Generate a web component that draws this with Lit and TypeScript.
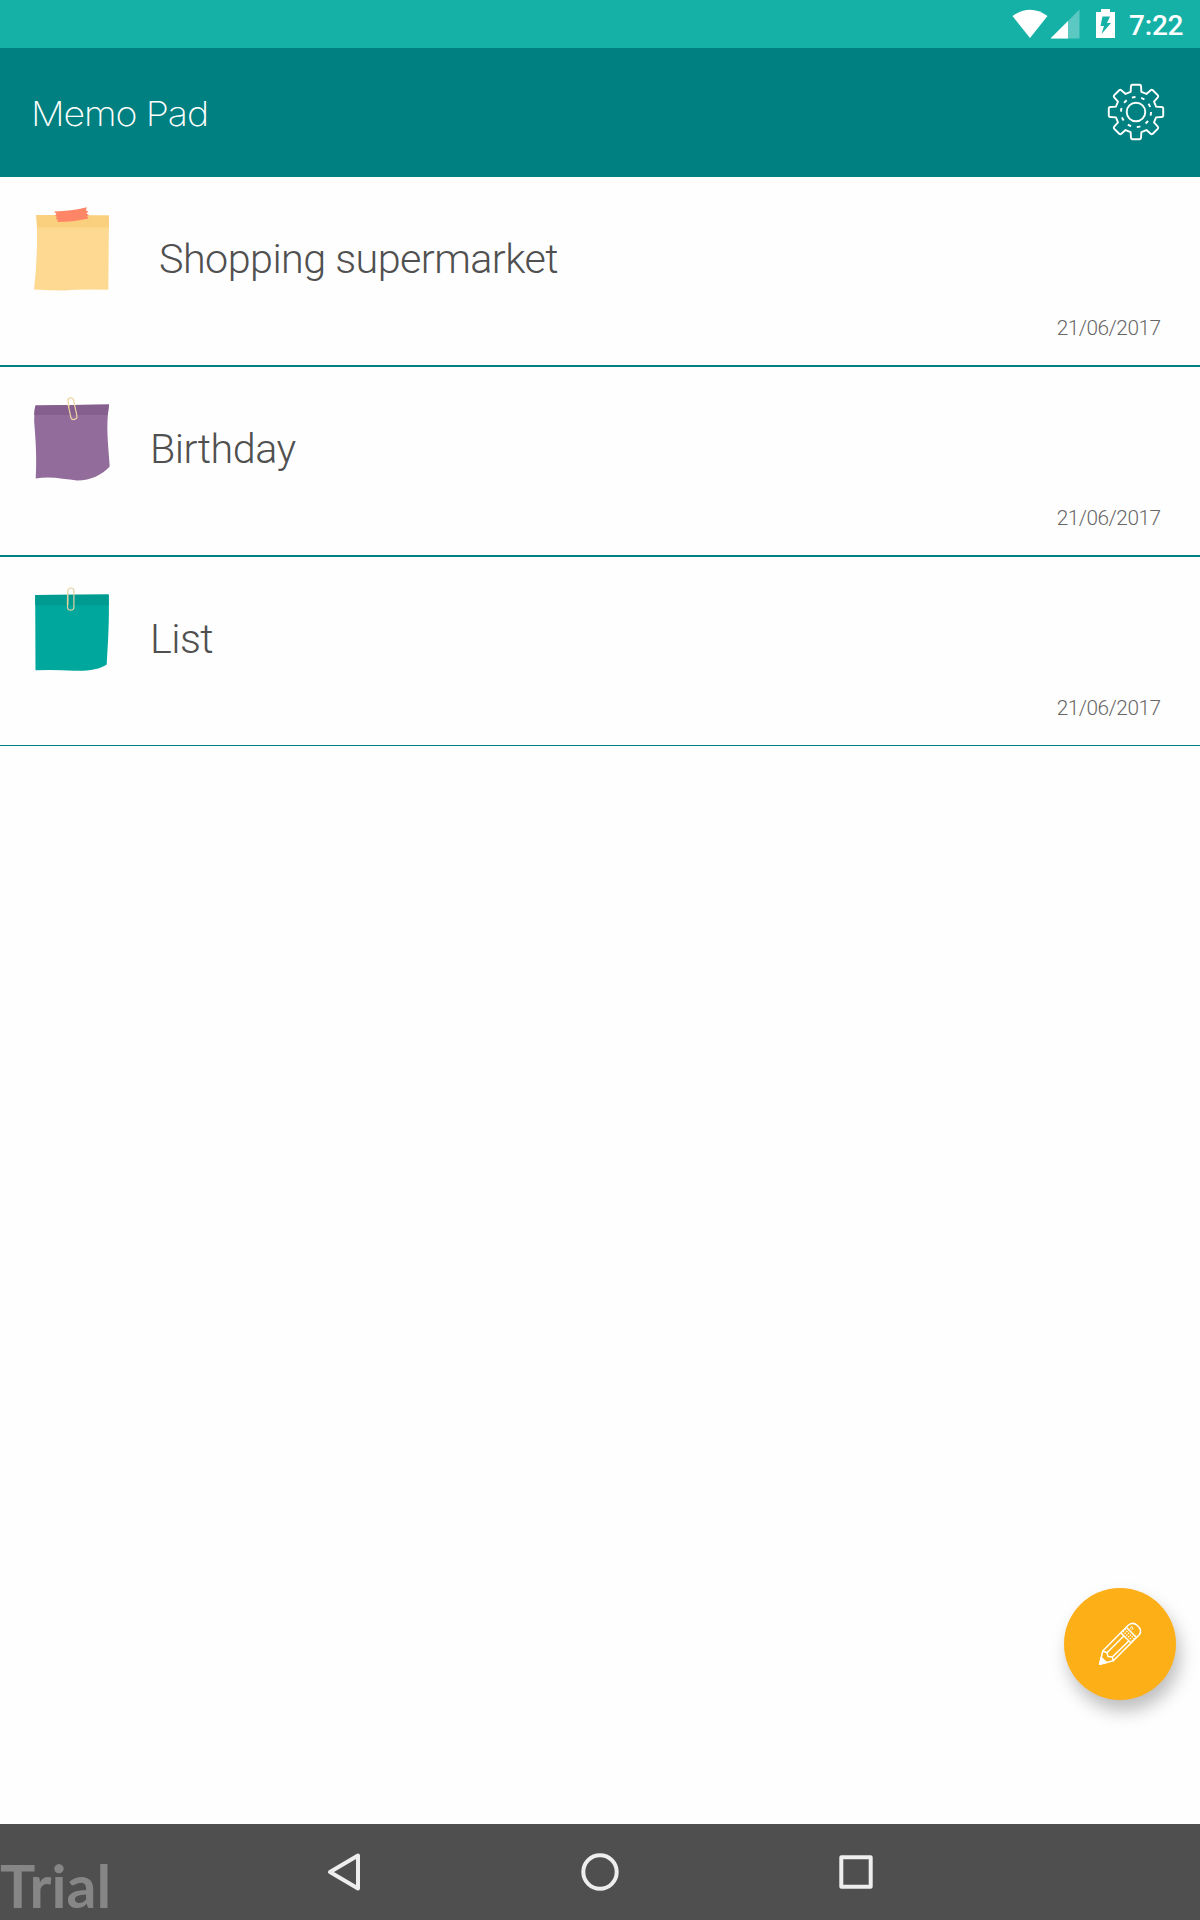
import { LitElement, html, css, svg } from "lit";
import { customElement, property } from "lit/decorators.js";

type NoteKind = "tape" | "purple" | "green";

interface Memo {
  title: string;
  date: string;
  kind: NoteKind;
  indent: boolean;
}

const MEMOS: Memo[] = [
  { title: "Shopping supermarket", date: "21/06/2017", kind: "tape", indent: true },
  { title: "Birthday", date: "21/06/2017", kind: "purple", indent: false },
  { title: "List", date: "21/06/2017", kind: "green", indent: false },
];

const gearTooth = (a: number) => {
  const p = (r: number, d: number) => {
    const t = ((a + d) * Math.PI) / 180;
    return `${(30 + r * Math.sin(t)).toFixed(2)} ${(30 - r * Math.cos(t)).toFixed(2)}`;
  };
  return `${p(20.8, -15)} L${p(26.3, -11)} Q${p(27.4, -10.6)} ${p(27.5, -8)} L${p(27.5, 8)} Q${p(27.4, 10.6)} ${p(26.3, 11)} L${p(20.8, 15)}`;
};
const GEAR = "M" + [0, 45, 90, 135, 180, 225, 270, 315].map(gearTooth).join(" L") + "Z";

@customElement("note-icon")
export class NoteIcon extends LitElement {
  @property() kind: NoteKind = "tape";

  static styles = css`
    :host { display: block; width: 110px; height: 120px; }
    svg { display: block; }
  `;

  render() {
    const art = {
      tape: svg`
        <path d="M16.3 25 L89 25.5 L88.3 99.8 Q60 99 45 100.5 Q28 100.5 14 99.5 Q18.5 60 16.3 25Z" fill="#fdd991"/>
        <path d="M16.3 25 L89 25.5 V37.5 H17.2Z" fill="#facf7d"/>
        <path d="M34 21.5 Q52 21 66.7 17.2 L66 20.5 L68.3 21.5 L66.5 23.5 L69 25 L67 26 L68.5 28.5 Q52 32 37.5 32 L37.8 29.5 L35.5 29 L37 27 L35 25.5 L36.5 24Z" fill="#fe8566"/>`,
      purple: svg`
        <path d="M15.5 25.5 L89 24.5 C85.5 48 88.5 66 89.7 86.5 C82 95 70 100.7 57 100.5 C44 99.5 32 96 15.7 98.5 C17 78 15.5 58 14.2 42 Q14 32 15.5 25.5Z" fill="#926c9b"/>
        <path d="M15.5 25.5 L89 24.5 L87.8 35 H14.2 Q14.2 30 15.5 25.5Z" fill="#855f8e"/>
        <g transform="rotate(-12 52.5 28.7)" fill="none" stroke="#f0d4a4" stroke-width="1.2">
          <path d="M49.7 26 V20.5 a2.8 2.8 0 0 1 5.6 0 V36.5 a3.1 3.1 0 0 1 -6.2 0 V24"/>
        </g>`,
      green: svg`
        <path d="M15.2 25 L88.7 24.5 C89.5 50 88 72 86.7 94.5 C80 99.3 68 101.2 54 100.7 Q35 99.7 15.5 100.3Z" fill="#00a79d"/>
        <path d="M15.2 25 L88.7 24.5 V35.5 H15.2Z" fill="#009b90"/>
        <path d="M47.5 25 V37 a3.2 3.2 0 0 0 6.4 0 V21 a3 3 0 0 0 -6 0 V35" fill="none" stroke="#e2d29f" stroke-width="1.2"/>`,
    }[this.kind];
    return html`<svg width="110" height="120" viewBox="0 0 110 120">${art}</svg>`;
  }
}

@customElement("memo-row")
export class MemoRow extends LitElement {
  @property({ attribute: false }) memo!: Memo;

  static styles = css`
    :host {
      display: grid;
      grid-template-columns: 130px 1fr;
      box-sizing: border-box;
      height: 190px;
      border-bottom: 2px solid #008080;
      font-family: Roboto, "Liberation Sans", sans-serif;
      font-weight: 300;
    }
    :host([last]) { height: 189px; border-bottom-width: 1px; }
    note-icon { margin: 13px 0 0 20px; }
    .body { display: flex; flex-direction: column; padding: 55px 39.5px 0 20px; }
    .title { font-size: 41.3px; line-height: 54px; letter-spacing: -0.55px; color: #505050; white-space: pre; }
    .indented { padding-left: 9px; }
    .date { align-self: flex-end; margin-top: 29px; font-size: 20.8px; line-height: 26px; letter-spacing: -0.5px; color: #666; }
  `;

  render() {
    return html`
      <note-icon .kind=${this.memo.kind}></note-icon>
      <div class="body">
        <div class="title ${this.memo.indent ? "indented" : ""}">${this.memo.title}</div>
        <div class="date">${this.memo.date}</div>
      </div>`;
  }
}

@customElement("app-root")
export class AppRoot extends LitElement {
  static styles = css`
    :host {
      display: flex;
      flex-direction: column;
      position: relative;
      width: 1200px;
      height: 1920px;
      overflow: hidden;
      background: #fefefe;
      font-family: Roboto, "Liberation Sans", sans-serif;
    }
    svg { display: block; }
    .status { display: flex; justify-content: flex-end; height: 48px; background: #15b1a7; color: #fff; }
    .clock { width: 71px; font-size: 28px; font-weight: 500; line-height: 51px; letter-spacing: -0.2px; white-space: nowrap; }
    .bar { display: flex; justify-content: space-between; height: 129px; background: #008080; color: #fff; }
    .heading {
      margin: 0 0 0 31px; font-family: Inter, Lato, sans-serif; font-weight: 250; font-size: 33.5px;
      line-height: 133px; letter-spacing: -1px; transform: scaleX(1.12); transform-origin: 0 50%;
    }
    .gear { margin: 33.7px 34px 0 0; }
    main { flex: 1; }
    nav { display: grid; grid-template-columns: 300px 1fr; height: 96px; background: #4f4f4f; }
    .trial { grid-column: 1; grid-row: 1; padding-top: 32px; font-family: Lato, "Open Sans", sans-serif; font-weight: 700; font-size: 59px; line-height: 60px; color: #868686; }
    .keys { grid-column: 1 / -1; grid-row: 1; }
    .fab {
      position: absolute; left: 1064px; top: 1588px; width: 112px; height: 112px;
      border: 0; padding: 0; border-radius: 50%; background: #fcaf17;
      box-shadow: 4px 11px 17px rgba(0, 0, 0, 0.25);
    }
  `;

  render() {
    return html`
      <div class="status">
        <svg width="129" height="48" viewBox="1000 0 129 48" fill="#fff">
          <path d="M1012.5 16 Q1030 3.5 1047.5 16 L1030 38Z"/>
          <path d="M1079.5 9.5 V38.5 H1050.5Z" opacity=".3"/>
          <path d="M1068 21 V38.5 H1050.5Z"/>
          <path fill-rule="evenodd" d="M1096 12 H1101 V9 H1110 V12 H1115 V38 H1096Z M1102.5 16.5 L1100.5 26 H1104 L1101.5 34 L1111 23 H1107 L1110 16.5Z"/>
        </svg>
        <div class="clock">7:22</div>
      </div>
      <header class="bar">
        <h1 class="heading">Memo Pad</h1>
        <svg class="gear" width="60" height="60" viewBox="0 0 60 60" fill="none" stroke="#fff" stroke-width="1.9" stroke-linejoin="round">
          <path d=${GEAR}/>
          <circle cx="30" cy="30" r="9.3"/>
          <circle cx="30" cy="30" r="15" stroke-dasharray="3.6 5.825" stroke-dashoffset="-0.1"/>
        </svg>
      </header>
      <main>
        ${MEMOS.map((m, i) => html`<memo-row .memo=${m} ?last=${i === MEMOS.length - 1}></memo-row>`)}
      </main>
      <nav>
        <div class="trial">Trial</div>
        <svg class="keys" width="1200" height="96" viewBox="0 0 1200 96" fill="none" stroke="#eee" stroke-width="4" stroke-linejoin="round">
          <path d="M358 31.5 V64.5 L330 48Z"/>
          <circle cx="600" cy="48" r="16.7"/>
          <rect x="841.3" y="33.3" width="29.4" height="29.4"/>
        </svg>
      </nav>
      <button class="fab" aria-label="New memo">
        <svg width="112" height="112" viewBox="0 0 112 112" fill="none" stroke="#fff" stroke-width="1.5" stroke-linejoin="round">
          <path d="M35.7 76.3 L38.7 63 L64.5 37 Q69 33.5 73.3 37.5 Q78.5 42.2 75.5 46.5 L49.3 72.7Z"/>
          <path d="M35.7 76.3 L37.2 69.5 L42.5 74.6Z" fill="#fff"/>
          <path d="M38.7 63 L43 64.7 L44 68.5 L48.3 69 L49.3 72.7 M43 64.7 L59.8 48 M48.3 69 L65 52.8"/>
          <path d="M57 45 L66.8 54.8 M62.5 39.5 L72.5 49.5"/>
          <path d="M58.9 43.1 L68.8 53 M60.7 41.3 L70.6 51.2" stroke-dasharray="1.2 1.3"/>
          <path d="M66 41 l1.5 -2.5 l1.7 1.5 M67.5 42.3 l1.5 -2.3" stroke-width=".9"/>
        </svg>
      </button>`;
  }
}
